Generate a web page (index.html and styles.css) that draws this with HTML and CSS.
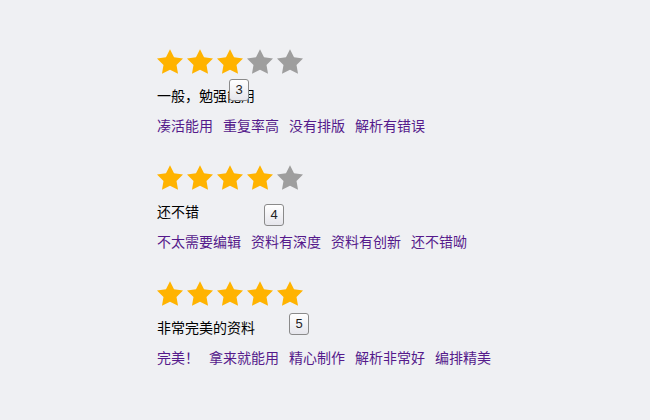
FILE: index.html
```html
<!DOCTYPE html>
<html lang="zh-CN">
<head>
  <meta charset="UTF-8" />
  <title>评分</title>
  <link rel="stylesheet" href="styles.css">
</head>
<body>
  <div class="ratings">
    <div class="rating">
      <div class="stars">
        <svg class="star on" viewBox="2 2 20 19.02"><path d="M12 2l3.09 6.26L22 9.27l-5 4.87 1.18 6.88L12 17.77l-6.18 3.25L7 14.14 2 9.27l6.91-1.01L12 2z"/></svg>
        <svg class="star on" viewBox="2 2 20 19.02"><path d="M12 2l3.09 6.26L22 9.27l-5 4.87 1.18 6.88L12 17.77l-6.18 3.25L7 14.14 2 9.27l6.91-1.01L12 2z"/></svg>
        <svg class="star on" viewBox="2 2 20 19.02"><path d="M12 2l3.09 6.26L22 9.27l-5 4.87 1.18 6.88L12 17.77l-6.18 3.25L7 14.14 2 9.27l6.91-1.01L12 2z"/></svg>
        <svg class="star" viewBox="2 2 20 19.02"><path d="M12 2l3.09 6.26L22 9.27l-5 4.87 1.18 6.88L12 17.77l-6.18 3.25L7 14.14 2 9.27l6.91-1.01L12 2z"/></svg>
        <svg class="star" viewBox="2 2 20 19.02"><path d="M12 2l3.09 6.26L22 9.27l-5 4.87 1.18 6.88L12 17.77l-6.18 3.25L7 14.14 2 9.27l6.91-1.01L12 2z"/></svg>
      </div>
      <div class="comment">一般，勉强能用</div>
      <div class="tags">
        <a href="#">凑活能用</a><a href="#">重复率高</a><a href="#">没有排版</a><a href="#">解析有错误</a>
      </div>
      <span class="tip tip-3">3</span>
    </div>

    <div class="rating">
      <div class="stars">
        <svg class="star on" viewBox="2 2 20 19.02"><path d="M12 2l3.09 6.26L22 9.27l-5 4.87 1.18 6.88L12 17.77l-6.18 3.25L7 14.14 2 9.27l6.91-1.01L12 2z"/></svg>
        <svg class="star on" viewBox="2 2 20 19.02"><path d="M12 2l3.09 6.26L22 9.27l-5 4.87 1.18 6.88L12 17.77l-6.18 3.25L7 14.14 2 9.27l6.91-1.01L12 2z"/></svg>
        <svg class="star on" viewBox="2 2 20 19.02"><path d="M12 2l3.09 6.26L22 9.27l-5 4.87 1.18 6.88L12 17.77l-6.18 3.25L7 14.14 2 9.27l6.91-1.01L12 2z"/></svg>
        <svg class="star on" viewBox="2 2 20 19.02"><path d="M12 2l3.09 6.26L22 9.27l-5 4.87 1.18 6.88L12 17.77l-6.18 3.25L7 14.14 2 9.27l6.91-1.01L12 2z"/></svg>
        <svg class="star" viewBox="2 2 20 19.02"><path d="M12 2l3.09 6.26L22 9.27l-5 4.87 1.18 6.88L12 17.77l-6.18 3.25L7 14.14 2 9.27l6.91-1.01L12 2z"/></svg>
      </div>
      <div class="comment">还不错</div>
      <div class="tags">
        <a href="#">不太需要编辑</a><a href="#">资料有深度</a><a href="#">资料有创新</a><a href="#">还不错呦</a>
      </div>
      <span class="tip tip-4">4</span>
    </div>

    <div class="rating">
      <div class="stars">
        <svg class="star on" viewBox="2 2 20 19.02"><path d="M12 2l3.09 6.26L22 9.27l-5 4.87 1.18 6.88L12 17.77l-6.18 3.25L7 14.14 2 9.27l6.91-1.01L12 2z"/></svg>
        <svg class="star on" viewBox="2 2 20 19.02"><path d="M12 2l3.09 6.26L22 9.27l-5 4.87 1.18 6.88L12 17.77l-6.18 3.25L7 14.14 2 9.27l6.91-1.01L12 2z"/></svg>
        <svg class="star on" viewBox="2 2 20 19.02"><path d="M12 2l3.09 6.26L22 9.27l-5 4.87 1.18 6.88L12 17.77l-6.18 3.25L7 14.14 2 9.27l6.91-1.01L12 2z"/></svg>
        <svg class="star on" viewBox="2 2 20 19.02"><path d="M12 2l3.09 6.26L22 9.27l-5 4.87 1.18 6.88L12 17.77l-6.18 3.25L7 14.14 2 9.27l6.91-1.01L12 2z"/></svg>
        <svg class="star on" viewBox="2 2 20 19.02"><path d="M12 2l3.09 6.26L22 9.27l-5 4.87 1.18 6.88L12 17.77l-6.18 3.25L7 14.14 2 9.27l6.91-1.01L12 2z"/></svg>
      </div>
      <div class="comment">非常完美的资料</div>
      <div class="tags">
        <a href="#">完美！</a><a href="#">拿来就能用</a><a href="#">精心制作</a><a href="#">解析非常好</a><a href="#">编排精美</a>
      </div>
      <span class="tip tip-5">5</span>
    </div>
  </div>
</body>
</html>
```

FILE: styles.css
```css
html, body { margin: 0; height: 100%; }
body {
  background: #eff0f3;
  font-family: "Noto Sans CJK SC", "Noto Sans", sans-serif;
  font-size: 14px;
  color: #000;
}

.ratings {
  padding: 49px 0 0 157px;
  display: flex;
  flex-direction: column;
  gap: 30px;
}
.rating { position: relative; }

.stars { display: flex; gap: 4px; height: 25px; }
.star { width: 26px; height: 25px; fill: #9e9e9e; }
.star.on { fill: #ffb300; }

.comment { margin-top: 11px; line-height: 20px; }
.tags { margin-top: 10px; line-height: 20px; display: flex; gap: 10px; }
.tags a { color: #551a8b; text-decoration: none; }

.tip {
  position: absolute;
  width: 18px; height: 20px;
  border: 1px solid #8a8a8a;
  border-radius: 3px;
  background: linear-gradient(#ffffff, #e6e6ec);
  font-family: "Liberation Sans", Arial, sans-serif;
  font-size: 13px;
  line-height: 20px;
  text-align: center;
  color: #222;
}
.tip-3 { left: 72px; top: 30px; }
.tip-4 { left: 107px; top: 39px; }
.tip-5 { left: 132px; top: 32px; }
```
